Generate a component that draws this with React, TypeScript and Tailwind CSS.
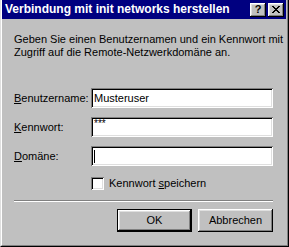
const raised =
  "shadow-[inset_-1px_-1px_0_#000,inset_1px_1px_0_#fff,inset_-2px_-2px_0_#808080,inset_2px_2px_0_#dfdfdf]";
const sunken =
  "shadow-[inset_1px_1px_0_#808080,inset_-1px_-1px_0_#fff,inset_2px_2px_0_#000,inset_-2px_-2px_0_#dfdfdf]";

function Field({ label, mnemonic, children }: { label: string; mnemonic: string; children?: React.ReactNode }) {
  return (
    <div className="flex items-center h-[20px]">
      <div className="w-[77px] text-black">
        <span className="underline underline-offset-[1px]">{mnemonic}</span>
        {label}
      </div>
      <div className={`w-[182px] h-[20px] bg-white ${sunken} flex items-center pl-[3px] pt-px`}>{children}</div>
    </div>
  );
}

export default function App() {
  return (
    <div
      className="w-[289px] h-[247px] bg-[#c0c0c0] border-l border-r border-b border-l-[#dfdfdf] border-r-black border-b-black text-[11px] leading-[13px] text-black"
      style={{ fontFamily: '"Liberation Sans", Arial, sans-serif' }}
    >
      <div className="h-full flex flex-col border-l border-r border-b border-l-white border-r-[#808080] border-b-[#808080] pr-px">
        <div className="h-[19px] bg-[#000080] flex items-center pl-[3px] pr-[2px]">
          <div className="flex-1 text-white font-bold text-[12px] leading-[19px] whitespace-nowrap">
            Verbindung mit init networks herstellen
          </div>
          <div className={`w-[16px] h-[14px] bg-[#c0c0c0] ${raised} flex items-center justify-center font-bold text-[11px] leading-none pb-px`}>
            ?
          </div>
          <div className={`ml-[2px] w-[16px] h-[14px] bg-[#c0c0c0] ${raised} flex items-center justify-center pb-px`}>
            <svg width="8" height="7" viewBox="0 0 8 7" shapeRendering="crispEdges">
              <path d="M0 0h2v1h-2zM6 0h2v1h-2zM1 1h2v1h-2zM5 1h2v1h-2zM2 2h4v1h-4zM3 3h2v1h-2zM2 4h4v1h-4zM1 5h2v1h-2zM5 5h2v1h-2zM0 6h2v1h-2zM6 6h2v1h-2z" fill="#000" />
            </svg>
          </div>
        </div>

        <div className="pl-[12px] flex flex-col">
          <p className="mt-[14px] whitespace-nowrap">
            Geben Sie einen Benutzernamen und ein Kennwort mit
            <br />
            Zugriff auf die Remote-Netzwerkdomäne an.
          </p>

          <div className="mt-[29px] flex flex-col gap-[9px]">
            <Field mnemonic="B" label="enutzername:">
              <span>Musteruser</span>
            </Field>
            <Field mnemonic="K" label="ennwort:">
              <span className="self-start mt-[1px] text-[10px] leading-[10px]">***</span>
            </Field>
            <Field mnemonic="D" label="omäne:">
              <span className="w-px h-[13px] bg-black" />
            </Field>
          </div>

          <div className="mt-[11px] ml-[77px] flex items-center h-[13px]">
            <div className={`w-[13px] h-[13px] bg-white ${sunken}`} />
            <span className="ml-[5px]">
              Kennwort <span className="underline underline-offset-[1px]">s</span>peichern
            </span>
          </div>

          <div className="mt-[10px] w-[259px] h-[2px] border-t border-t-[#808080] border-b border-b-white" />

          <div className="mt-[7px] w-[259px] flex justify-end gap-[6px]">
            <div className="w-[75px] h-[23px] border border-black">
              <div className={`w-full h-full ${raised} flex items-center justify-center`}>OK</div>
            </div>
            <div className={`w-[75px] h-[23px] ${raised} flex items-center justify-center`}>Abbrechen</div>
          </div>
        </div>
      </div>
    </div>
  );
}
